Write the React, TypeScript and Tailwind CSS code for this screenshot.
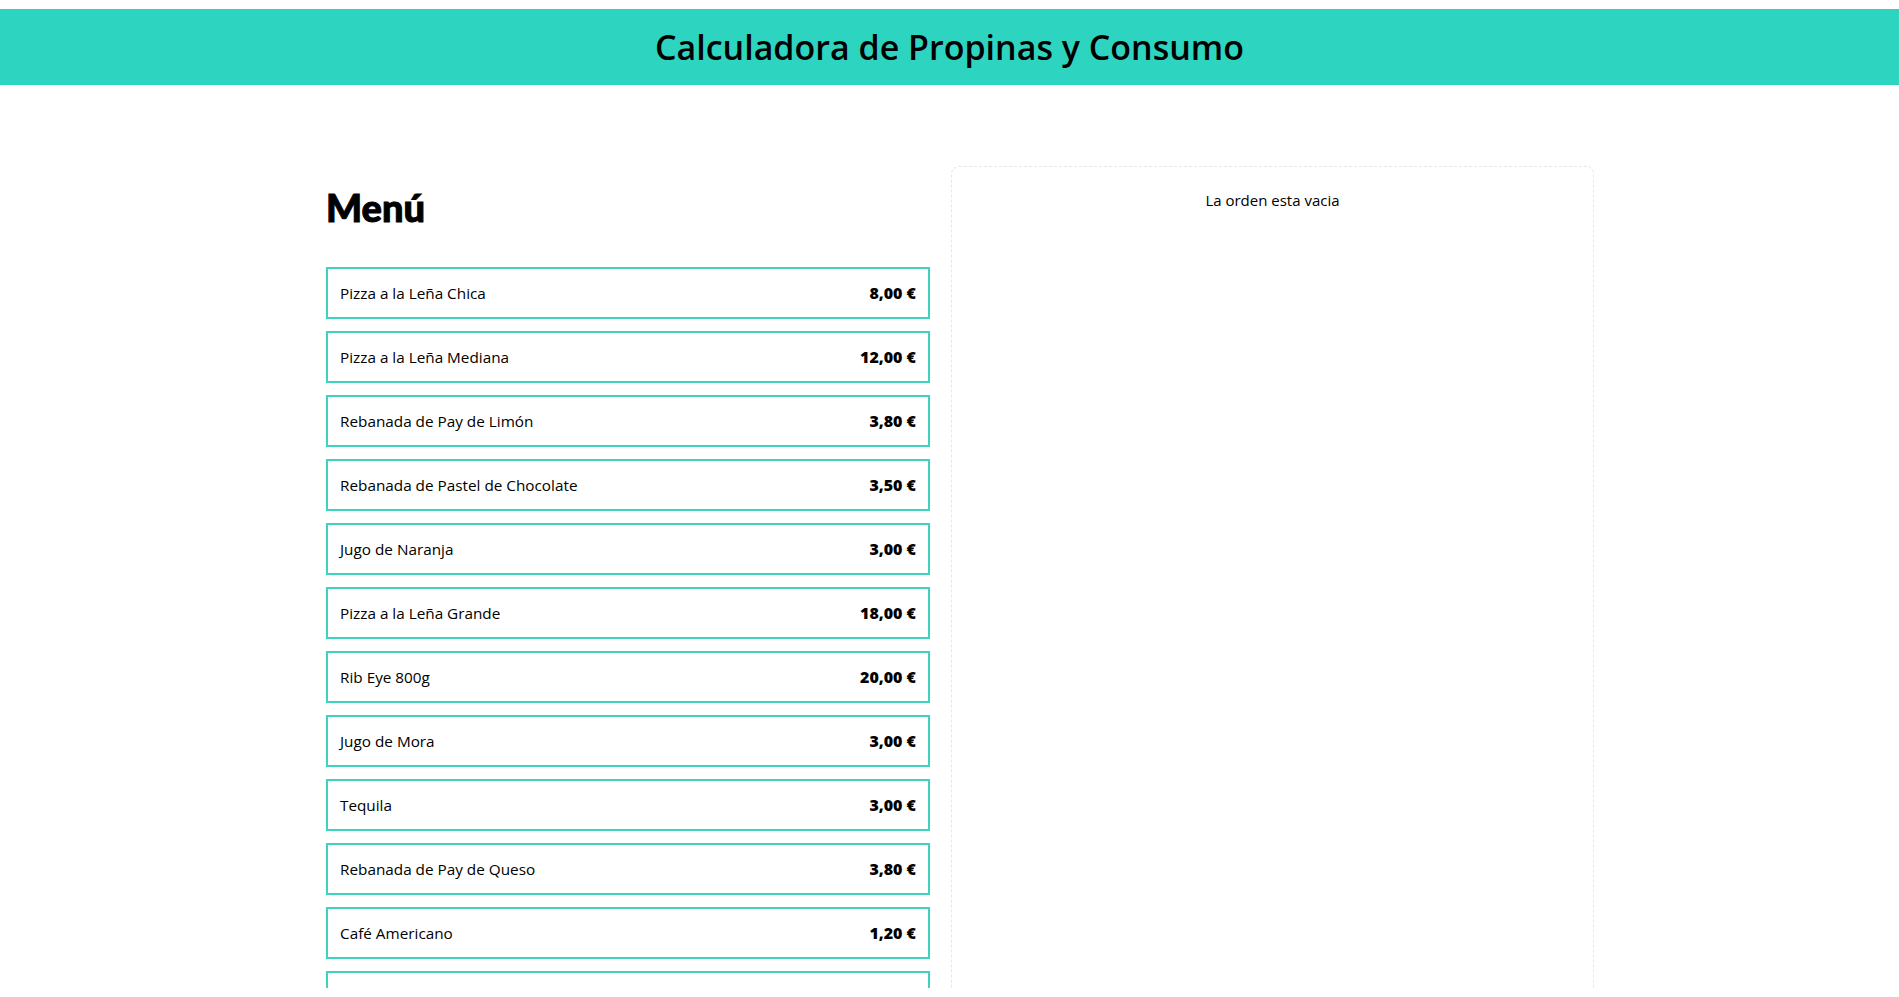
import React from "react";

const items = [
  { name: "Pizza a la Leña Chica", price: "8,00 €" },
  { name: "Pizza a la Leña Mediana", price: "12,00 €" },
  { name: "Rebanada de Pay de Limón", price: "3,80 €" },
  { name: "Rebanada de Pastel de Chocolate", price: "3,50 €" },
  { name: "Jugo de Naranja", price: "3,00 €" },
  { name: "Pizza a la Leña Grande", price: "18,00 €" },
  { name: "Rib Eye 800g", price: "20,00 €" },
  { name: "Jugo de Mora", price: "3,00 €" },
  { name: "Tequila", price: "3,00 €" },
  { name: "Rebanada de Pay de Queso", price: "3,80 €" },
  { name: "Café Americano", price: "1,20 €" },
  { name: "Cerveza", price: "2,50 €" },
];

export default function App() {
  return (
    <div className="h-[988px] overflow-hidden bg-white text-black font-['Open_Sans','Noto_Sans',sans-serif]">
      <header className="mt-[9px] flex h-[76px] items-center justify-center bg-[#2dd5c1]">
        <h1 className="text-[34px] font-semibold leading-10">Calculadora de Propinas y Consumo</h1>
      </header>
      <main className="ml-[326px] mt-[81px] flex items-stretch gap-[21px]">
        <div className="w-[604px] pt-[21px]">
          <h2 className="font-['Lato',sans-serif] text-[38px] font-black leading-10 [-webkit-text-stroke:1px_black]">
            Menú
          </h2>
          <div className="mt-[40px] flex flex-col gap-3">
            {items.map((it) => (
              <button
                key={it.name}
                className="flex w-full items-center justify-between border-2 border-[#3fd3bf] px-3 py-3 text-left text-[15.3px] leading-6"
              >
                <span>{it.name}</span>
                <span className="text-base font-extrabold">{it.price}</span>
              </button>
            ))}
          </div>
        </div>
        <div className="w-[643px] rounded-lg border border-dashed border-gray-200 px-6 pt-[21px]">
          <p className="text-center text-[15px] leading-6">La orden esta vacia</p>
        </div>
      </main>
    </div>
  );
}
